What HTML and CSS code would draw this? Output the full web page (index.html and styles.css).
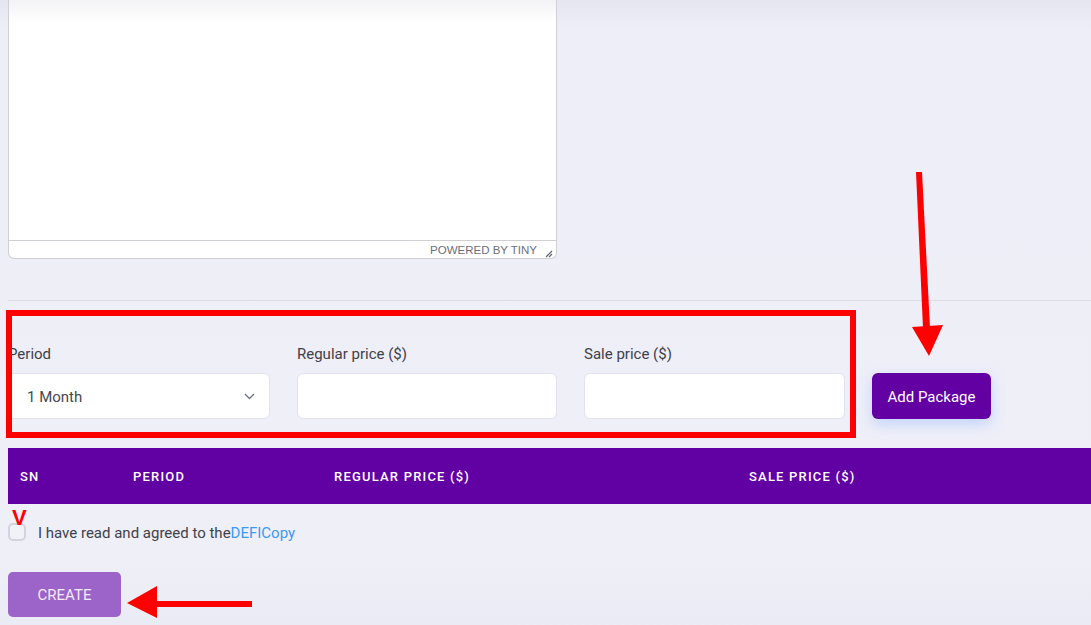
FILE: index.html
```html
<!DOCTYPE html>
<html lang="en">
<head>
<meta charset="utf-8">
<title>Create package</title>
<link rel="stylesheet" href="styles.css">
</head>
<body>
<div class="page">
  <div class="editor">
    <div class="editor-body"></div>
    <div class="statusbar">
      <span class="brand">Powered by Tiny</span>
      <svg class="resize" width="10" height="10" viewBox="0 0 10 10"><path d="M9 3 L3 9 M9 6 L6 9" stroke="#5f6370" stroke-width="1.2" fill="none"/></svg>
    </div>
  </div>

  <div class="divider"></div>

  <div class="form-row">
    <div class="field">
      <label class="label">Period</label>
      <div class="control select">
        <span>1 Month</span>
        <svg class="chevron" width="11" height="7" viewBox="0 0 11 7"><path d="M1 1 L5.5 5.5 L10 1" stroke="#6d7080" stroke-width="1.3" fill="none"/></svg>
      </div>
    </div>
    <div class="field">
      <label class="label">Regular price ($)</label>
      <div class="control"></div>
    </div>
    <div class="field">
      <label class="label">Sale price ($)</label>
      <div class="control"></div>
    </div>
    <button class="btn-add">Add Package</button>
  </div>

  <div class="table-head">
    <div class="th th-sn">SN</div>
    <div class="th th-period">Period</div>
    <div class="th th-regular">Regular price ($)</div>
    <div class="th th-sale">Sale price ($)</div>
  </div>

  <div class="agree">
    <span class="checkbox"></span>
    <span class="agree-text">I have read and agreed to the<a class="link">DEFICopy</a></span>
  </div>

  <button class="btn-create">CREATE</button>
</div>

<span class="mark-v">V</span>
<svg class="annot" width="1091" height="625" viewBox="0 0 1091 625">
  <rect x="9" y="313" width="844" height="122" fill="none" stroke="#ff0000" stroke-width="6"/>
  <polygon points="916,172 922,172 930,328 923,328" fill="#ff0000"/>
  <polygon points="912,327 943,325 929,356" fill="#ff0000"/>
  <rect x="155" y="601" width="97" height="6" fill="#ff0000"/>
  <polygon points="127,603 157,586 157,618" fill="#ff0000"/>
</svg>
</body>
</html>
```

FILE: styles.css
```css
html, body {
  margin: 0;
  padding: 0;
}
body {
  width: 1091px;
  height: 625px;
  overflow: hidden;
  position: relative;
  font-family: Roboto, "Liberation Sans", Arial, sans-serif;
  background: linear-gradient(to bottom, #e6e6f1 0, #eeeef8 30px, #efeff8 560px, #ebebf5 625px);
  color: #3d3f48;
}
.page {
  padding-left: 8px;
}
.editor {
  width: 547px;
  height: 258px;
  border: 1px solid #cfcfd4;
  border-top: none;
  border-radius: 0 0 6px 6px;
  background: #fff;
  display: flex;
  flex-direction: column;
  overflow: hidden;
}
.editor-body {
  flex: 1;
  background: linear-gradient(to bottom, #f3f3f5 0, #ffffff 22px);
}
.statusbar {
  height: 17px;
  border-top: 1px solid #cfcfd4;
  display: flex;
  align-items: center;
  justify-content: flex-end;
  padding-right: 3px;
}
.brand {
  font-family: "Liberation Sans", Arial, sans-serif;
  font-size: 11.5px;
  text-transform: uppercase;
  color: #6c707a;
  margin-right: 6px;
  margin-top: 1px;
}
.resize {
  margin-top: 6px;
}
.divider {
  margin-top: 41px;
  height: 1px;
  background: #dcdde8;
}
.form-row {
  margin-top: 42px;
  display: grid;
  grid-template-columns: 262px 260px 261px 119px;
  column-gap: 27px;
  align-items: end;
}
.field {
  display: flex;
  flex-direction: column;
}
.label {
  font-size: 15px;
  line-height: 22px;
  color: #3e4049;
  margin-bottom: 8px;
}
.control {
  box-sizing: border-box;
  height: 46px;
  background: #fff;
  border: 1px solid #e2e3ee;
  border-radius: 6px;
}
.select {
  display: flex;
  align-items: center;
  justify-content: space-between;
  padding: 2px 14px 0 18px;
  font-size: 15px;
  color: #454752;
}
.chevron {
  margin-top: -2px;
}
.btn-add {
  box-sizing: border-box;
  height: 46px;
  width: 119px;
  padding-top: 3px;
  border: none;
  border-radius: 6px;
  background: #6200a3;
  color: #fff;
  font-family: Roboto, "Liberation Sans", Arial, sans-serif;
  font-size: 15px;
  box-shadow: 0 5px 14px rgba(110, 160, 255, 0.35);
}
.table-head {
  margin-top: 29px;
  height: 56px;
  background: #6100a3;
  display: flex;
  align-items: center;
}
.th {
  box-sizing: border-box;
  padding-left: 12px;
  color: #fff;
  font-size: 13px;
  font-weight: 500;
  letter-spacing: 1.2px;
  text-transform: uppercase;
}
.th-sn { width: 113px; }
.th-period { width: 201px; }
.th-regular { width: 415px; }
.th-sale { flex: 1; }
.agree {
  margin-top: 19px;
  display: flex;
  align-items: center;
  height: 18px;
}
.checkbox {
  box-sizing: border-box;
  width: 18px;
  height: 18px;
  border: 2px solid #d2d3de;
  border-radius: 5px;
  background: #f1f1f8;
}
.agree-text {
  margin-left: 12px;
  margin-top: 2px;
  font-size: 15px;
  color: #3f414a;
}
.link {
  color: #3c9af0;
}
.btn-create {
  display: block;
  margin-top: 31px;
  box-sizing: border-box;
  width: 113px;
  height: 45px;
  padding-top: 2px;
  border: none;
  border-radius: 5px;
  background: #9c64c9;
  color: #f3eafa;
  font-family: Roboto, "Liberation Sans", Arial, sans-serif;
  font-size: 15px;
}
.mark-v {
  position: absolute;
  left: 12px;
  top: 507px;
  font-family: "Liberation Sans", Arial, sans-serif;
  font-weight: bold;
  font-size: 22px;
  line-height: 22px;
  color: #ff0000;
}
.annot {
  position: absolute;
  left: 0;
  top: 0;
  pointer-events: none;
}
```
